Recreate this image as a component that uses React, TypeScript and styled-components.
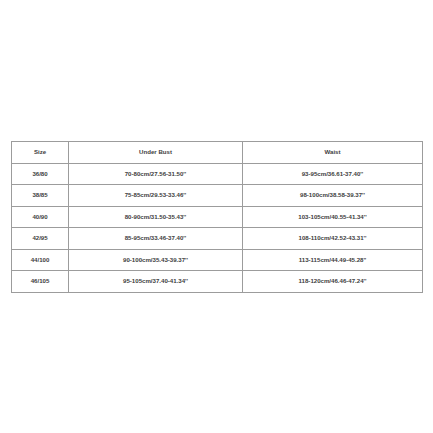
import styled, { createGlobalStyle } from 'styled-components';

const GlobalStyle = createGlobalStyle`
  html, body {
    margin: 0;
    padding: 0;
    background: #ffffff;
  }
  body {
    font-family: "Liberation Sans", Arial, sans-serif;
  }
`;

const Page = styled.div`
  width: 433px;
  height: 433px;
  padding: 141px 0 0 11px;
  box-sizing: border-box;
`;

const Table = styled.table`
  width: 411px;
  border-collapse: collapse;
  table-layout: fixed;
  border: 1.2px solid #959595;
`;

const Col = styled.col<{ $w: number }>`
  width: ${({ $w }) => $w}px;
`;

const Row = styled.tr`
  height: 21.5px;
`;

const Cell = styled.td`
  padding: 0;
  border: 1.2px solid #9c9c9c;
  text-align: center;
  vertical-align: middle;
  font-size: 6.1px;
  line-height: 1;
  font-weight: 700;
  color: #3d3d3d;
`;

const rows = [
  ['36/80', '70-80cm/27.56-31.50\'\'', '93-95cm/36.61-37.40\'\''],
  ['38/85', '75-85cm/29.53-33.46\'\'', '98-100cm/38.58-39.37\'\''],
  ['40/90', '80-90cm/31.50-35.43\'\'', '103-105cm/40.55-41.34\'\''],
  ['42/95', '85-95cm/33.46-37.40\'\'', '108-110cm/42.52-43.31\'\''],
  ['44/100', '90-100cm/35.43-39.37\'\'', '113-115cm/44.49-45.28\'\''],
  ['46/105', '95-105cm/37.40-41.34\'\'', '118-120cm/46.46-47.24\'\''],
];

export default function App() {
  return (
    <>
      <GlobalStyle />
      <Page>
        <Table>
          <colgroup>
            <Col $w={57} />
            <Col $w={174} />
            <Col $w={180} />
          </colgroup>
          <tbody>
            <Row>
              <Cell>Size</Cell>
              <Cell>Under Bust</Cell>
              <Cell>Waist</Cell>
            </Row>
            {rows.map((r) => (
              <Row key={r[0]}>
                <Cell>{r[0]}</Cell>
                <Cell>{r[1]}</Cell>
                <Cell>{r[2]}</Cell>
              </Row>
            ))}
          </tbody>
        </Table>
      </Page>
    </>
  );
}
